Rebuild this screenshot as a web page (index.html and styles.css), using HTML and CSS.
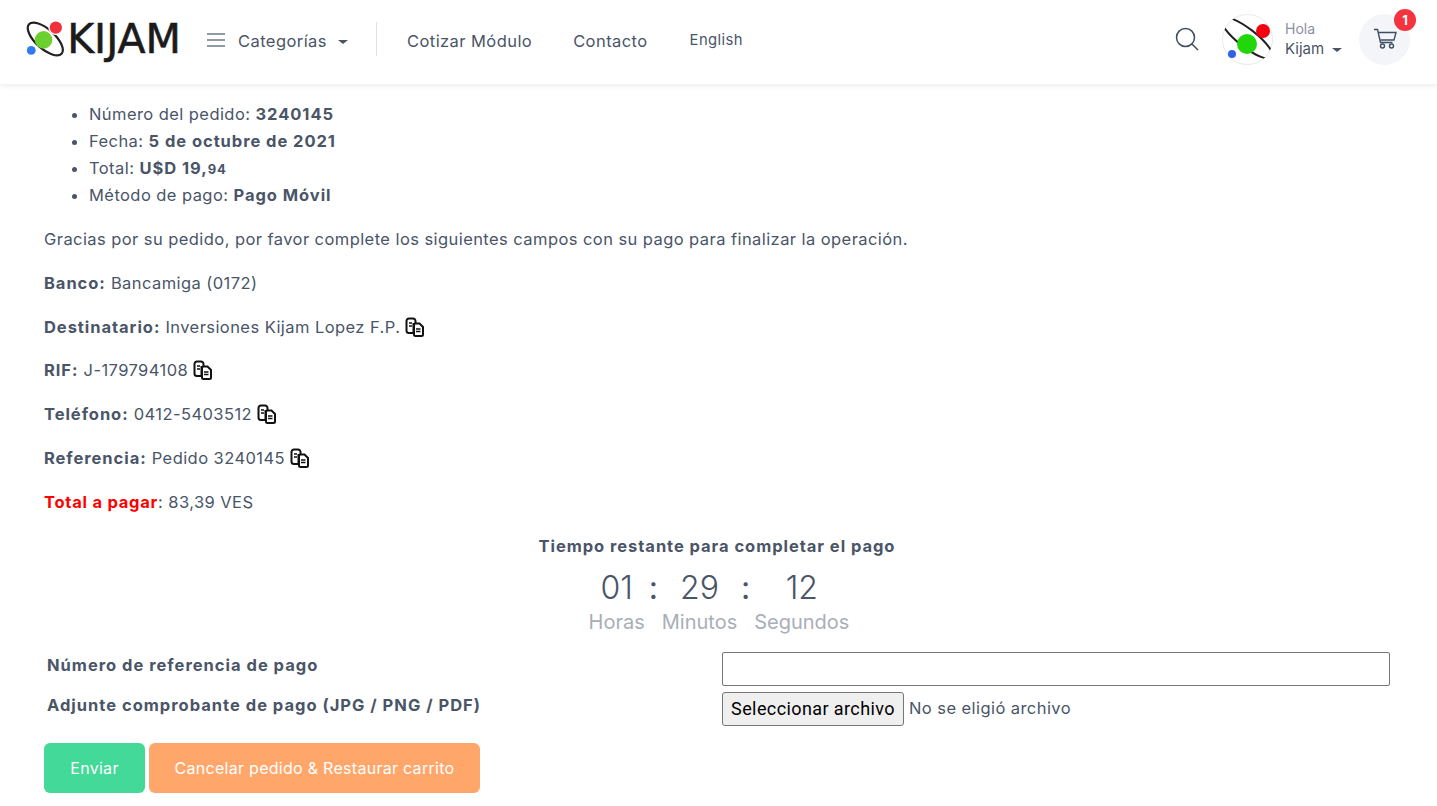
FILE: index.html
```html
<!DOCTYPE html>
<html lang="es">
<head>
    <meta charset="UTF-8">
    <meta name="viewport" content="width=device-width, initial-scale=1.0">
    <title>Kijam - Pago Móvil</title>
    <link rel="stylesheet" href="styles.css">
</head>
<body>

<svg class="defs" width="0" height="0">
    <symbol id="copy" viewBox="0 0 20 20">
        <path d="M4 1.500h4a2.500 2.500 0 0 1 2.500 2.500v3H8.500v9H4A2.500 2.500 0 0 1 1.500 13.500V4A2.500 2.500 0 0 1 4 1.500z" fill="#fff" stroke="#111" stroke-width="2"/>
        <path d="M10.500 6.500h4l3.500 3.500v7.500a1.500 1.500 0 0 1-1.500 1.500h-6a1.500 1.500 0 0 1-1.500-1.500V8a1.500 1.500 0 0 1 1.500-1.500z" fill="#fff" stroke="#111" stroke-width="2"/>
        <path d="M4 6h3M4 9h3M11 12h4.500M11 14.500h4.500" stroke="#111" stroke-width="1.500"/>
    </symbol>
</svg>

<header class="topbar">
    <a class="logo">
        <svg width="47" height="40" viewBox="0 0 47 40">
            <ellipse cx="22" cy="20" rx="25" ry="11" transform="rotate(42 22 20)" fill="none" stroke="#222" stroke-width="2.500"/>
            <circle cx="20" cy="21" r="10" fill="#6bd02e"/>
            <circle cx="34" cy="7" r="8.500" fill="#fff"/>
            <circle cx="34" cy="7" r="7" fill="#f0303a"/>
            <circle cx="6" cy="33" r="5" fill="#2f7cf0"/>
        </svg>
        <span class="logo-text">KIJAM</span>
    </a>
    <a class="menu-cat">
        <svg class="burger" width="18" height="14" viewBox="0 0 18 14"><path d="M0 1h18M0 7h18M0 13h18" stroke="#6b7a90" stroke-width="1.300"/></svg>
        <span class="cat-text">Categorías <i class="caret"></i></span>
    </a>
    <nav class="nav">
        <a>Cotizar Módulo</a>
        <a>Contacto</a>
        <a class="lang">English</a>
    </nav>
    <div class="actions">
        <svg class="search" width="24" height="24" viewBox="0 0 24 24" fill="none" stroke="#3f4d60" stroke-width="1.500"><circle cx="10.500" cy="10.500" r="9"/><path d="M17 17l6 6"/></svg>
        <div class="avatar">
            <svg width="51" height="51" viewBox="0 0 51 51">
                <clipPath id="round"><circle cx="25.500" cy="25.500" r="25"/></clipPath>
                <circle cx="25.500" cy="25.500" r="25" fill="#fff" stroke="#e6e8ee"/>
                <g clip-path="url(#round)">
                    <ellipse cx="25" cy="24" rx="32" ry="9" transform="rotate(38 25 24)" fill="none" stroke="#222" stroke-width="2"/>
                </g>
                <circle cx="25" cy="30" r="10" fill="#22d60c"/>
                <circle cx="41" cy="17" r="7" fill="#f5000f"/>
                <circle cx="10" cy="40" r="4" fill="#2f62e8"/>
            </svg>
        </div>
        <div class="user">
            <span class="hello">Hola</span>
            <span class="name">Kijam <i class="caret"></i></span>
        </div>
        <a class="cart">
            <svg width="24" height="22" viewBox="0 0 24 22" fill="none" stroke="#3f4d60" stroke-width="1.400"><path d="M1 1.500h3.500l3 13h12"/><path d="M5.500 4.500H23l-2 7.500H7.500"/><circle cx="9.500" cy="18" r="2"/><circle cx="18.500" cy="18" r="2"/></svg>
            <span class="badge">1</span>
        </a>
    </div>
</header>

<main class="content">
    <ul class="order">
        <li>Número del pedido: <b>3240145</b></li>
        <li>Fecha: <b>5 de octubre de 2021</b></li>
        <li>Total: <b>U$D 19,<small>94</small></b></li>
        <li>Método de pago: <b>Pago Móvil</b></li>
    </ul>

    <p>Gracias por su pedido, por favor complete los siguientes campos con su pago para finalizar la operación.</p>
    <p><b>Banco:</b> Bancamiga (0172)</p>
    <p><b>Destinatario:</b> Inversiones Kijam Lopez F.P. <svg class="copy"><use href="#copy"/></svg></p>
    <p><b>RIF:</b> J-179794108 <svg class="copy"><use href="#copy"/></svg></p>
    <p><b>Teléfono:</b> 0412-5403512 <svg class="copy"><use href="#copy"/></svg></p>
    <p><b>Referencia:</b> Pedido 3240145 <svg class="copy"><use href="#copy"/></svg></p>
    <p><b class="red">Total a pagar</b>: 83,39 VES</p>

    <div class="timer">
        <b class="timer-title">Tiempo restante para completar el pago</b>
        <div class="clock">
            <span class="num">01</span><span class="sep">:</span><span class="num">29</span><span class="sep">:</span><span class="num">12</span>
            <span class="unit">Horas</span><span></span><span class="unit">Minutos</span><span></span><span class="unit">Segundos</span>
        </div>
    </div>

    <form class="pay-form">
        <label class="field-label" for="ref">Número de referencia de pago</label>
        <input class="field-input" type="text" id="ref">
        <label class="field-label">Adjunte comprobante de pago (JPG / PNG / PDF)</label>
        <div class="file-row">
            <button type="button" class="file-btn">Seleccionar archivo</button>
            <span>No se eligió archivo</span>
        </div>
    </form>

    <div class="buttons">
        <button type="button" class="btn green">Enviar</button>
        <button type="button" class="btn orange">Cancelar pedido &amp; Restaurar carrito</button>
    </div>
</main>

</body>
</html>
```

FILE: styles.css
```css
body {
    margin: 0;
    font-family: Inter, "Open Sans", sans-serif;
    font-size: 16.500px;
    letter-spacing: 0.430px;
    line-height: 27px;
    color: #4a5568;
    background-color: #fff;
}
.defs {
    position: absolute;
}
.topbar {
    display: flex;
    align-items: center;
    height: 84px;
    padding: 0 0 6px 26px;
    box-sizing: border-box;
    background-color: #fff;
    box-shadow: 0 1px 6px rgba(0, 0, 0, 0.1);
}
.logo {
    display: flex;
    align-items: center;
    gap: 0;
    width: 155px;
}
.logo-text {
    font-family: "DejaVu Sans", sans-serif;
    font-size: 41px;
    line-height: 40px;
    letter-spacing: 0;
    color: #1b1b1b;
    -webkit-text-stroke: 0.600px #1b1b1b;
}
.menu-cat {
    display: flex;
    align-items: center;
    width: 169px;
    margin-left: 26px;
    height: 34px;
    border-right: 1px solid #dde2ea;
}
.burger {
    margin: 2px 13px 0 0;
}
.cat-text {
    margin-top: 4px;
}
.caret {
    display: inline-block;
    margin-left: 6px;
    border-top: 4px solid #4a5568;
    border-left: 5px solid transparent;
    border-right: 5px solid transparent;
    vertical-align: middle;
}
.nav {
    display: flex;
    align-items: center;
    gap: 41px;
    margin: 4px 0 0 30px;
}
.lang {
    font-size: 14.800px;
    margin: -2px 0 0 1px;
}
.actions {
    display: flex;
    align-items: center;
    margin-left: auto;
    margin-right: 27px;
}
.search {
    margin-right: 23px;
}
.avatar {
    display: flex;
    margin-right: 12px;
}
.user {
    display: flex;
    flex-direction: column;
    width: 74px;
    margin-bottom: 1px;
    letter-spacing: 0;
}
.hello {
    font-size: 14px;
    line-height: 21px;
    color: #8a8fa8;
}
.name {
    font-size: 15px;
    line-height: 20px;
}
.name .caret {
    margin-left: 4px;
}
.cart {
    position: relative;
    display: flex;
    align-items: center;
    justify-content: center;
    width: 51px;
    height: 51px;
    border-radius: 50%;
    background-color: #f3f5f9;
}
.badge {
    position: absolute;
    top: -5px;
    right: -6px;
    width: 22px;
    height: 22px;
    border-radius: 50%;
    background-color: #f5333f;
    color: #fff;
    font-size: 13px;
    font-weight: 700;
    line-height: 22px;
    letter-spacing: 0;
    text-align: center;
}
.content {
    padding: 17px 47px 0 44px;
}
b {
    font-weight: 700;
    letter-spacing: 0.950px;
}
.order {
    margin: 0 0 17px;
    padding-left: 45px;
}
.order small {
    font-size: 13px;
    line-height: 1;
}
p {
    margin: 0 0 16.800px;
}
.copy {
    width: 20px;
    height: 20px;
    vertical-align: -4px;
}
.red {
    color: #f00;
    letter-spacing: 0.750px;
}
.timer {
    text-align: center;
}
.timer-title {
    display: block;
}
.clock {
    display: inline-grid;
    grid-template-columns: auto 17px auto 17px auto;
    justify-items: center;
    margin-top: 8px;
    padding-left: 4px;
    letter-spacing: 0;
}
.num {
    font-size: 32px;
    font-weight: 300;
    line-height: 39px;
}
.sep {
    font-size: 32px;
    font-weight: 400;
    line-height: 39px;
}
.unit {
    font-size: 20px;
    line-height: 30px;
    color: #a9aeb9;
}
.pay-form {
    display: grid;
    grid-template-columns: 675px 668px;
    row-gap: 6px;
    align-items: start;
    margin: 15px 0 17px 3px;
}
.field-label {
    font-weight: 700;
    letter-spacing: 1px;
}
.field-input {
    height: 34px;
    box-sizing: border-box;
    border: 1px solid #767676;
    border-radius: 2px;
}
.file-row {
    display: flex;
    align-items: center;
    gap: 5px;
}
.file-btn {
    width: 182px;
    height: 34px;
    padding: 0;
    font-family: Roboto, sans-serif;
    font-size: 18px;
    letter-spacing: 0.400px;
    color: #000;
    background-color: #efefef;
    border: 1px solid #767676;
    border-radius: 3px;
}
.buttons {
    display: flex;
    gap: 4px;
}
.btn {
    width: 331px;
    height: 50px;
    padding: 0;
    font-family: inherit;
    font-size: 16px;
    letter-spacing: 0.280px;
    color: #fff;
    border: none;
    border-radius: 6px;
}
.green {
    width: 101px;
    background-color: #43d998;
}
.orange {
    background-color: #ffa66b;
}
```
